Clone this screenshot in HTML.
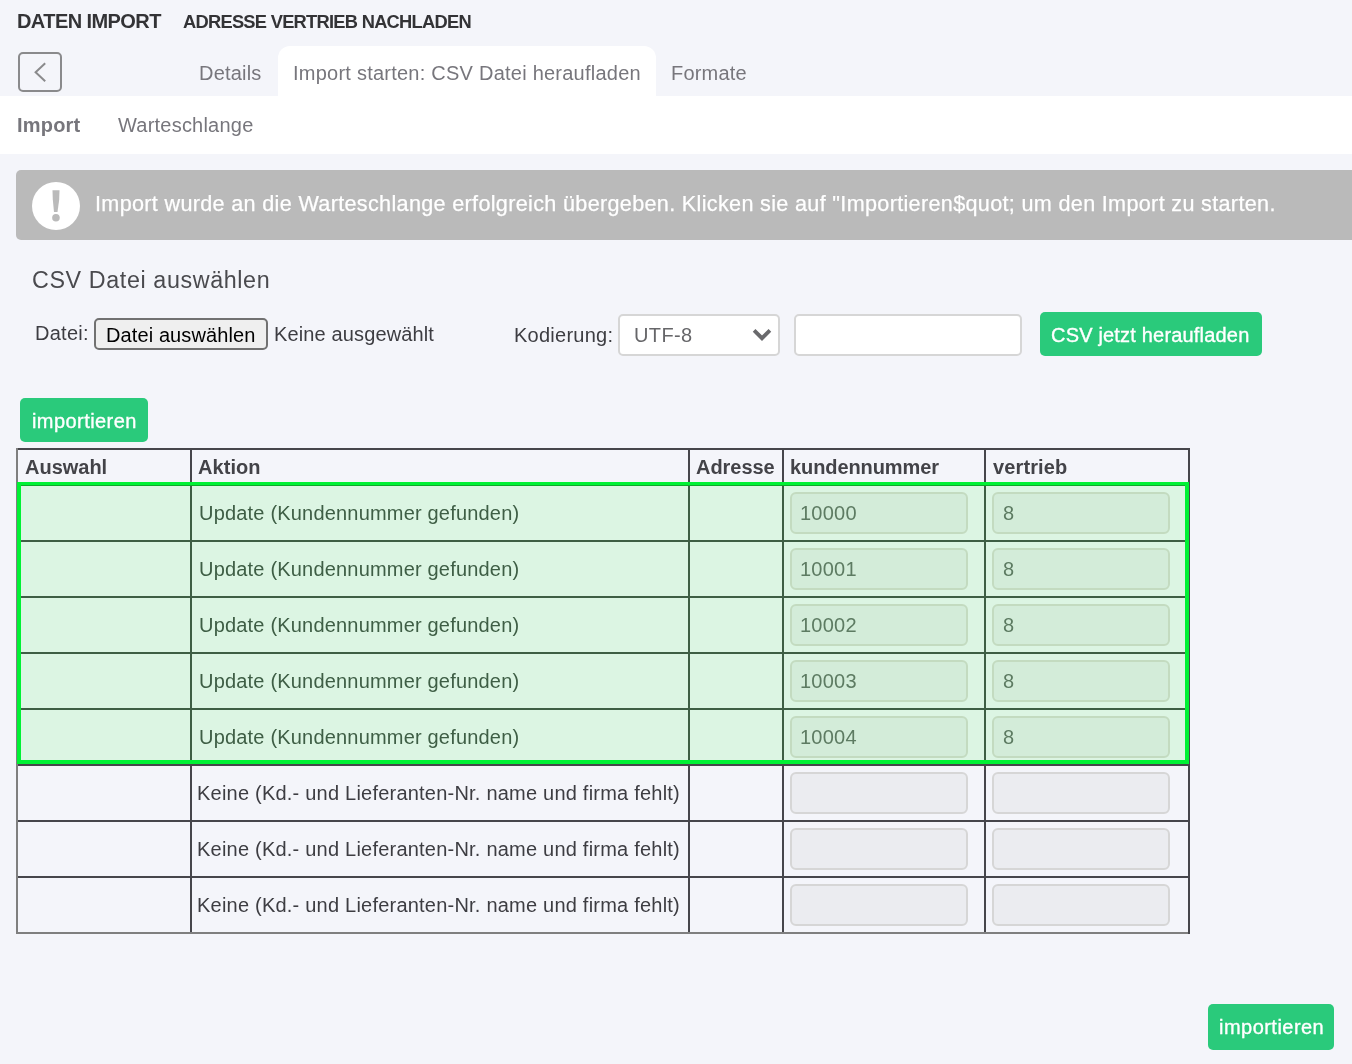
<!DOCTYPE html>
<html><head><meta charset="utf-8"><title>Daten Import</title>
<style>
html,body{margin:0;padding:0;}
body{width:1352px;height:1064px;background:#f4f5fa;position:relative;overflow:hidden;font-family:"Liberation Sans",sans-serif;}
.t{position:absolute;white-space:nowrap;will-change:transform;}
.b{position:absolute;}
</style></head><body>
<div class="t" style="left:17.00px;top:11.07px;font-size:20px;line-height:20px;font-weight:700;color:#333336;letter-spacing:-0.573px">DATEN IMPORT</div>
<div class="t" style="left:182.70px;top:12.51px;font-size:18.3px;line-height:18.3px;font-weight:700;color:#333336;letter-spacing:-0.724px">ADRESSE VERTRIEB NACHLADEN</div>
<div class="b" style="left:18px;top:52px;width:44px;height:40px;border:2px solid #8a8a8c;border-radius:5px;box-sizing:border-box;"></div>
<svg class="b" style="left:18px;top:52px" width="44" height="40" viewBox="0 0 44 40"><path d="M27.2 11.2 L17.6 20.2 L27.2 29.2" fill="none" stroke="#8a8a8c" stroke-width="2"/></svg>
<div class="b" style="left:0px;top:96px;width:1352px;height:58px;background:#fff;"></div>
<div class="b" style="left:278px;top:46px;width:378px;height:50px;background:#fff;border-radius:12px 12px 0 0;"></div>
<div class="t" style="left:198.80px;top:63.07px;font-size:20px;line-height:20px;font-weight:400;color:#77767c;letter-spacing:0.200px">Details</div>
<div class="t" style="left:292.80px;top:63.07px;font-size:20px;line-height:20px;font-weight:400;color:#77767c;letter-spacing:0.239px">Import starten: CSV Datei heraufladen</div>
<div class="t" style="left:671.20px;top:63.07px;font-size:20px;line-height:20px;font-weight:400;color:#77767c;letter-spacing:0.200px">Formate</div>
<div class="t" style="left:17.00px;top:115.07px;font-size:20px;line-height:20px;font-weight:700;color:#77767c;letter-spacing:0.200px">Import</div>
<div class="t" style="left:118.20px;top:115.07px;font-size:20px;line-height:20px;font-weight:400;color:#77767c;letter-spacing:0.217px">Warteschlange</div>
<div class="b" style="left:16px;top:170px;width:1336px;height:70px;background:#bababa;border-radius:5px 0 0 5px;"></div>
<svg class="b" style="left:32px;top:182px" width="48" height="48" viewBox="0 0 48 48"><circle cx="24" cy="24" r="24" fill="#fff"/><path d="M20.5 8.2 L27.5 8.2 L27.2 17.5 L25.5 30.1 L22.0 30.1 L20.8 17.5 Z" fill="#bababa"/><circle cx="23.95" cy="35.75" r="3.8" fill="#bababa"/></svg>
<div class="t" style="left:95.00px;top:193.42px;font-size:21.6px;line-height:21.6px;font-weight:400;color:#fff;letter-spacing:0.328px;-webkit-text-stroke:0.25px #fff">Import wurde an die Warteschlange erfolgreich übergeben. Klicken sie auf "Importieren$quot; um den Import zu starten.</div>
<div class="t" style="left:32.00px;top:269.28px;font-size:23.3px;line-height:23.3px;font-weight:400;color:#4a4a4e;letter-spacing:0.611px">CSV Datei auswählen</div>
<div class="t" style="left:35.00px;top:322.67px;font-size:20px;line-height:20px;font-weight:400;color:#3d3d42;letter-spacing:0.260px">Datei:</div>
<div class="b" style="left:94px;top:318px;width:174px;height:32px;background:#efefef;border:2px solid #717171;border-radius:5px;box-sizing:border-box;"></div>
<div class="t" style="left:106.00px;top:325.07px;font-size:20px;line-height:20px;font-weight:400;color:#000;letter-spacing:0.107px">Datei auswählen</div>
<div class="t" style="left:274.00px;top:323.87px;font-size:20px;line-height:20px;font-weight:400;color:#3d3d42;letter-spacing:0.133px">Keine ausgewählt</div>
<div class="t" style="left:513.90px;top:325.17px;font-size:20px;line-height:20px;font-weight:400;color:#3d3d42;letter-spacing:0.256px">Kodierung:</div>
<div class="b" style="left:618px;top:314px;width:162px;height:42px;background:#fff;border:2px solid #d6d6d6;border-radius:5px;box-sizing:border-box;"></div>
<div class="t" style="left:633.80px;top:325.17px;font-size:20px;line-height:20px;font-weight:400;color:#666669;letter-spacing:0.375px">UTF-8</div>
<svg class="b" style="left:750px;top:325px" width="24" height="20" viewBox="0 0 24 20"><path d="M4.1 5.3 L12 13.2 L19.9 5.3" fill="none" stroke="#69696c" stroke-width="3.8"/></svg>
<div class="b" style="left:794px;top:314px;width:228px;height:42px;background:#fff;border:2px solid #d6d6d6;border-radius:5px;box-sizing:border-box;"></div>
<div class="b" style="left:1040px;top:312px;width:222px;height:44px;background:#2aca7b;border-radius:5px;"></div>
<div class="t" style="left:1050.80px;top:324.87px;font-size:20px;line-height:20px;font-weight:400;color:#fff;letter-spacing:0.185px;-webkit-text-stroke:0.35px #fff">CSV jetzt heraufladen</div>
<div class="b" style="left:20px;top:398px;width:128px;height:44px;background:#2aca7b;border-radius:5px;"></div>
<div class="t" style="left:32.20px;top:411.07px;font-size:20px;line-height:20px;font-weight:400;color:#fff;letter-spacing:0.430px;-webkit-text-stroke:0.35px #fff">importieren</div>
<div class="b" style="left:1208px;top:1004px;width:126px;height:46px;background:#2aca7b;border-radius:5px;"></div>
<div class="t" style="left:1218.70px;top:1017.07px;font-size:20px;line-height:20px;font-weight:400;color:#fff;letter-spacing:0.470px;-webkit-text-stroke:0.35px #fff">importieren</div>
<div class="b" style="left:18px;top:486px;width:1170px;height:278px;background:#dcf5e3;"></div>
<div class="b" style="left:18px;top:484px;width:1170px;height:2px;background:#3e5e44;"></div>
<div class="b" style="left:18px;top:540px;width:1170px;height:2px;background:#3e5e44;"></div>
<div class="b" style="left:18px;top:596px;width:1170px;height:2px;background:#3e5e44;"></div>
<div class="b" style="left:18px;top:652px;width:1170px;height:2px;background:#3e5e44;"></div>
<div class="b" style="left:18px;top:708px;width:1170px;height:2px;background:#3e5e44;"></div>
<div class="b" style="left:18px;top:764px;width:1170px;height:2px;background:#46464b;"></div>
<div class="b" style="left:18px;top:820px;width:1170px;height:2px;background:#46464b;"></div>
<div class="b" style="left:18px;top:876px;width:1170px;height:2px;background:#46464b;"></div>
<div class="b" style="left:190px;top:450px;width:2px;height:36px;background:#46464b;"></div>
<div class="b" style="left:190px;top:486px;width:2px;height:278px;background:#3e5e44;"></div>
<div class="b" style="left:190px;top:764px;width:2px;height:168px;background:#46464b;"></div>
<div class="b" style="left:688px;top:450px;width:2px;height:36px;background:#46464b;"></div>
<div class="b" style="left:688px;top:486px;width:2px;height:278px;background:#3e5e44;"></div>
<div class="b" style="left:688px;top:764px;width:2px;height:168px;background:#46464b;"></div>
<div class="b" style="left:782px;top:450px;width:2px;height:36px;background:#46464b;"></div>
<div class="b" style="left:782px;top:486px;width:2px;height:278px;background:#3e5e44;"></div>
<div class="b" style="left:782px;top:764px;width:2px;height:168px;background:#46464b;"></div>
<div class="b" style="left:984px;top:450px;width:2px;height:36px;background:#46464b;"></div>
<div class="b" style="left:984px;top:486px;width:2px;height:278px;background:#3e5e44;"></div>
<div class="b" style="left:984px;top:764px;width:2px;height:168px;background:#46464b;"></div>
<div class="b" style="left:16px;top:448px;width:1174px;height:2px;background:#46464b;"></div>
<div class="b" style="left:16px;top:448px;width:2px;height:486px;background:#7f7f7f;"></div>
<div class="b" style="left:16px;top:932px;width:1174px;height:2px;background:#7f7f7f;"></div>
<div class="b" style="left:1188px;top:448px;width:2px;height:486px;background:#46464b;"></div>
<div class="t" style="left:24.50px;top:457.07px;font-size:20px;line-height:20px;font-weight:700;color:#434348;letter-spacing:-0.017px">Auswahl</div>
<div class="t" style="left:198.20px;top:457.07px;font-size:20px;line-height:20px;font-weight:700;color:#434348;letter-spacing:0.060px">Aktion</div>
<div class="t" style="left:696.00px;top:457.07px;font-size:20px;line-height:20px;font-weight:700;color:#434348;letter-spacing:-0.033px">Adresse</div>
<div class="t" style="left:789.60px;top:457.07px;font-size:20px;line-height:20px;font-weight:700;color:#434348;letter-spacing:-0.091px">kundennummer</div>
<div class="t" style="left:993.00px;top:457.07px;font-size:20px;line-height:20px;font-weight:700;color:#434348;letter-spacing:0.129px">vertrieb</div>
<div class="t" style="left:198.50px;top:502.87px;font-size:20px;line-height:20px;font-weight:400;color:#3e5e45;letter-spacing:0.190px">Update (Kundennummer gefunden)</div>
<div class="b" style="left:790px;top:492px;width:178px;height:42px;background:#d3ecd9;border:2px solid #c3dbc0;border-radius:6px;box-sizing:border-box;"></div>
<div class="b" style="left:992px;top:492px;width:178px;height:42px;background:#d3ecd9;border:2px solid #c3dbc0;border-radius:6px;box-sizing:border-box;"></div>
<div class="t" style="left:800.00px;top:503.07px;font-size:20px;line-height:20px;font-weight:400;color:#5d7b62;letter-spacing:0.250px">10000</div>
<div class="t" style="left:1002.50px;top:503.07px;font-size:20px;line-height:20px;font-weight:400;color:#5d7b62;letter-spacing:0.000px">8</div>
<div class="t" style="left:198.50px;top:558.87px;font-size:20px;line-height:20px;font-weight:400;color:#3e5e45;letter-spacing:0.190px">Update (Kundennummer gefunden)</div>
<div class="b" style="left:790px;top:548px;width:178px;height:42px;background:#d3ecd9;border:2px solid #c3dbc0;border-radius:6px;box-sizing:border-box;"></div>
<div class="b" style="left:992px;top:548px;width:178px;height:42px;background:#d3ecd9;border:2px solid #c3dbc0;border-radius:6px;box-sizing:border-box;"></div>
<div class="t" style="left:800.00px;top:559.07px;font-size:20px;line-height:20px;font-weight:400;color:#5d7b62;letter-spacing:0.250px">10001</div>
<div class="t" style="left:1002.50px;top:559.07px;font-size:20px;line-height:20px;font-weight:400;color:#5d7b62;letter-spacing:0.000px">8</div>
<div class="t" style="left:198.50px;top:614.87px;font-size:20px;line-height:20px;font-weight:400;color:#3e5e45;letter-spacing:0.190px">Update (Kundennummer gefunden)</div>
<div class="b" style="left:790px;top:604px;width:178px;height:42px;background:#d3ecd9;border:2px solid #c3dbc0;border-radius:6px;box-sizing:border-box;"></div>
<div class="b" style="left:992px;top:604px;width:178px;height:42px;background:#d3ecd9;border:2px solid #c3dbc0;border-radius:6px;box-sizing:border-box;"></div>
<div class="t" style="left:800.00px;top:615.07px;font-size:20px;line-height:20px;font-weight:400;color:#5d7b62;letter-spacing:0.250px">10002</div>
<div class="t" style="left:1002.50px;top:615.07px;font-size:20px;line-height:20px;font-weight:400;color:#5d7b62;letter-spacing:0.000px">8</div>
<div class="t" style="left:198.50px;top:670.87px;font-size:20px;line-height:20px;font-weight:400;color:#3e5e45;letter-spacing:0.190px">Update (Kundennummer gefunden)</div>
<div class="b" style="left:790px;top:660px;width:178px;height:42px;background:#d3ecd9;border:2px solid #c3dbc0;border-radius:6px;box-sizing:border-box;"></div>
<div class="b" style="left:992px;top:660px;width:178px;height:42px;background:#d3ecd9;border:2px solid #c3dbc0;border-radius:6px;box-sizing:border-box;"></div>
<div class="t" style="left:800.00px;top:671.07px;font-size:20px;line-height:20px;font-weight:400;color:#5d7b62;letter-spacing:0.250px">10003</div>
<div class="t" style="left:1002.50px;top:671.07px;font-size:20px;line-height:20px;font-weight:400;color:#5d7b62;letter-spacing:0.000px">8</div>
<div class="t" style="left:198.50px;top:726.87px;font-size:20px;line-height:20px;font-weight:400;color:#3e5e45;letter-spacing:0.190px">Update (Kundennummer gefunden)</div>
<div class="b" style="left:790px;top:716px;width:178px;height:42px;background:#d3ecd9;border:2px solid #c3dbc0;border-radius:6px;box-sizing:border-box;"></div>
<div class="b" style="left:992px;top:716px;width:178px;height:42px;background:#d3ecd9;border:2px solid #c3dbc0;border-radius:6px;box-sizing:border-box;"></div>
<div class="t" style="left:800.00px;top:727.07px;font-size:20px;line-height:20px;font-weight:400;color:#5d7b62;letter-spacing:0.250px">10004</div>
<div class="t" style="left:1002.50px;top:727.07px;font-size:20px;line-height:20px;font-weight:400;color:#5d7b62;letter-spacing:0.000px">8</div>
<div class="t" style="left:197.00px;top:782.87px;font-size:20px;line-height:20px;font-weight:400;color:#3d3d42;letter-spacing:0.219px">Keine (Kd.- und Lieferanten-Nr. name und firma fehlt)</div>
<div class="b" style="left:790px;top:772px;width:178px;height:42px;background:#ebecf0;border:2px solid #d6d6d6;border-radius:6px;box-sizing:border-box;"></div>
<div class="b" style="left:992px;top:772px;width:178px;height:42px;background:#ebecf0;border:2px solid #d6d6d6;border-radius:6px;box-sizing:border-box;"></div>
<div class="t" style="left:197.00px;top:838.87px;font-size:20px;line-height:20px;font-weight:400;color:#3d3d42;letter-spacing:0.219px">Keine (Kd.- und Lieferanten-Nr. name und firma fehlt)</div>
<div class="b" style="left:790px;top:828px;width:178px;height:42px;background:#ebecf0;border:2px solid #d6d6d6;border-radius:6px;box-sizing:border-box;"></div>
<div class="b" style="left:992px;top:828px;width:178px;height:42px;background:#ebecf0;border:2px solid #d6d6d6;border-radius:6px;box-sizing:border-box;"></div>
<div class="t" style="left:197.00px;top:894.87px;font-size:20px;line-height:20px;font-weight:400;color:#3d3d42;letter-spacing:0.219px">Keine (Kd.- und Lieferanten-Nr. name und firma fehlt)</div>
<div class="b" style="left:790px;top:884px;width:178px;height:42px;background:#ebecf0;border:2px solid #d6d6d6;border-radius:6px;box-sizing:border-box;"></div>
<div class="b" style="left:992px;top:884px;width:178px;height:42px;background:#ebecf0;border:2px solid #d6d6d6;border-radius:6px;box-sizing:border-box;"></div>
<div class="b" style="left:17px;top:482px;width:1172px;height:282px;border:4px solid #00f134;box-sizing:border-box;"></div>
<div class="b" style="left:21px;top:485px;width:1164px;height:1px;background:#0ea82a;"></div>
</body></html>
